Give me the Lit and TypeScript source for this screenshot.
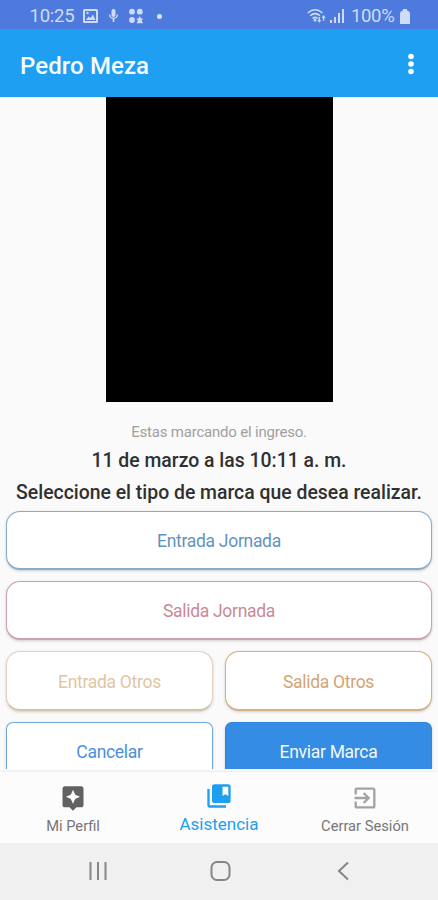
import { LitElement, html, css, svg } from "lit";
import { customElement, property } from "lit/decorators.js";

const tabIcons: Record<string, unknown> = {
  profile: svg`<path d="M19 2H5c-1.11 0-2 .9-2 2v14c0 1.1.89 2 2 2h4l3 3 3-3h4c1.1 0 2-.9 2-2V4c0-1.1-.9-2-2-2zm-5.12 10.88L12 17l-1.88-4.12L6 11l4.12-1.88L12 5l1.88 4.12L18 11l-4.12 1.88z"/>`,
  attendance: svg`<path d="M4 6H2v14c0 1.1.9 2 2 2h14v-2H4V6z"/><path d="M20 2H8c-1.1 0-2 .9-2 2v12c0 1.1.9 2 2 2h12c1.1 0 2-.9 2-2V4c0-1.1-.9-2-2-2zm0 10l-2.5-1.5L15 12V4h5v8z"/>`,
  logout: svg`<path d="M10.09 15.59L11.5 17l5-5-5-5-1.41 1.41L12.67 11H3v2h9.67l-2.58 2.59zM19 3H5c-1.11 0-2 .9-2 2v4h2V5h14v14H5v-4H3v4c0 1.1.89 2 2 2h14c1.1 0 2-.9 2-2V5c0-1.1-.9-2-2-2z"/>`,
};

@customElement("status-bar")
class StatusBar extends LitElement {
  static styles = css`
    :host { display: flex; align-items: center; height: 29px; padding: 3px 28px 0 29.5px; box-sizing: border-box;
      background: #4e7add; color: #cfdcf8; font: 400 18.5px/26px Roboto, sans-serif; }
    svg { display: block; fill: currentColor; flex: none; }
    .time { width: 53px; letter-spacing: -0.25px; }
    .mic { margin-left: 10px; }
    .apps { margin-left: 9px; }
    .dot { margin-left: 13px; width: 5px; height: 5px; border-radius: 50%; background: #dbe5fa; }
    .wifi { margin-left: auto; }
    .signal { margin-left: 4px; }
    .percent { margin-left: 7px; width: 49px; letter-spacing: -0.35px; white-space: nowrap; }
  `;
  render() {
    return html`
      <span class="time">10:25</span>
      <svg width="15" height="14" viewBox="0 0 15 14"><path fill-rule="evenodd" d="M1.5 0h12Q15 0 15 1.500v11Q15 14 13.500 14h-12Q0 14 0 12.500v-11Q0 0 1.500 0zM2 2v10h11V2zM3 11l2.500-3.500L7.500 9l2.500-3.500 2.500 5.500zM3.500 3h2v2h-2z"/></svg>
      <svg class="mic" width="11" height="14" viewBox="0 0 11 14"><rect x="3.500" y="0" width="4" height="8" rx="2"/><path d="M1 5.500h1.300a3.200 3.200 0 0 0 6.400 0H10a4.500 4.500 0 0 1-3.700 4.400V13H4.700V9.900A4.500 4.500 0 0 1 1 5.500z"/></svg>
      <svg class="apps" width="16" height="16" viewBox="0 0 16 16"><circle cx="4" cy="3.700" r="2.900"/><circle cx="11.800" cy="3.700" r="2.900"/><circle cx="4" cy="12" r="2.900"/><path d="M11.800 8l1.300 2.500h2.100l-1.500 2 1.300 2.800h-6.400l1.300-2.800-1.500-2h2.100z"/></svg>
      <span class="dot"></span>
      <svg class="wifi" width="19" height="16" viewBox="0 0 19 16"><g fill="none" stroke="currentColor" stroke-width="1.500"><path d="M.8 5Q8 -1.500 15.500 5"/><path d="M3.200 7.800Q8 3.500 13 7.800"/><path d="M5.600 10.500Q8 8.300 10.600 10.500"/></g><circle cx="8" cy="12" r="1.500"/><path d="M12.300 14.800l-2-2.800h1.300V9h1.400v3h1.300zM16.600 7l2 2.800h-1.300v3h-1.400v-3h-1.300z"/></svg>
      <svg class="signal" width="14" height="14" viewBox="0 0 14 14"><path d="M0 11h2v3H0zM4 8h2v6H4zM8 4h2v10H8zM12 0h2v14h-2z"/></svg>
      <span class="percent">100%</span>
      <svg width="10" height="15" viewBox="0 0 10 15"><path d="M3 0h4v1.500h.5Q10 2.500 10 4.500V15H0V4.500Q0 2.500 2.500 1.500H3z"/></svg>
    `;
  }
}

@customElement("mark-button")
class MarkButton extends LitElement {
  @property() label = "";
  @property({ reflect: true }) tone = "blue";
  static styles = css`
    :host { display: block; height: 59.5px; min-width: 0; }
    .button { display: flex; align-items: center; justify-content: center; width: 100%; height: 100%;
      box-sizing: border-box; padding: 2px 0 0; border: 1.5px solid #86abcb; border-bottom-width: 2px; border-radius: 14px;
      background: #fff; color: #5f93bf; font: 400 17.5px/22px Roboto, sans-serif; letter-spacing: -0.3px;
      box-shadow: 0 1px 3px rgba(0, 0, 0, 0.18); }
    :host([tone="rose"]) .button { color: #c98995; border-color: #cfa0aa; }
    :host([tone="sand"]) .button { color: #dfc6a4; border-color: #e6d2bc; border-bottom-color: #d5c4ac; }
    :host([tone="amber"]) .button { color: #d3a474; border-color: #d2b08a; }
    :host([tone="cancel"]) .button { color: #4a90dc; border-color: #6fa9dc; border-radius: 7px; }
    :host([tone="send"]) .button { color: #f4f9ff; background: #358ce4; border-color: #2e86df; border-radius: 7px; }
  `;
  render() {
    return html`<button class="button">${this.label}</button>`;
  }
}

@customElement("tab-item")
class TabItem extends LitElement {
  @property() label = "";
  @property() icon = "profile";
  static styles = css`
    :host { display: flex; flex-direction: column; align-items: center; padding-top: 12px; box-sizing: border-box;
      color: #767676; font: 400 14.7px/18px Roboto, sans-serif; }
    :host(.active) { color: #1e9ff0; font-size: 17px; padding-top: 10px; }
    svg { display: block; fill: #626262; margin-bottom: 5px; }
    :host(.active) svg { fill: #1e9ff0; margin-bottom: 5px; }
    :host(.muted) svg { fill: #a3a3a3; }
  `;
  render() {
    return html`<svg width="28" height="28" viewBox="0 0 24 24">${tabIcons[this.icon]}</svg><span>${this.label}</span>`;
  }
}

@customElement("app-root")
class AppRoot extends LitElement {
  static styles = css`
    :host { display: flex; flex-direction: column; height: 900px; overflow: hidden; background: #fafafa;
      font-family: Roboto, sans-serif; }
    .header { display: flex; align-items: center; justify-content: space-between; height: 68px; flex: none;
      padding: 4px 24px 0 20px; box-sizing: border-box; background: #1e9ff1; color: #f7fcff; }
    .title { font-size: 24px; line-height: 32px; font-weight: 500; letter-spacing: 0.1px; padding-top: 1px; }
    .more { display: block; fill: #fff; margin-top: -3px; }
    .content { height: 672px; flex: none; overflow: hidden; text-align: center; color: #303030; }
    .preview { width: 227px; height: 304.5px; margin: 0 auto; background: #000; }
    .hint { margin-top: 20px; font-size: 15px; line-height: 20px; color: #a0a0a0; letter-spacing: -0.2px; }
    .line { font-size: 19.4px; line-height: 32px; font-weight: 500; white-space: nowrap; }
    .date { margin-top: 3px; }
    .actions { display: grid; grid-template-columns: 1fr 1fr; gap: 10.9px 12px; padding: 0 6px; margin-top: 2px; }
    .wide { grid-column: span 2; }
    .tabs { display: grid; grid-template-columns: repeat(3, 1fr); height: 71px; margin-top: 3px; flex: none;
      background: #fcfcfc; box-shadow: 0 -1px 2px rgba(0, 0, 0, 0.06); }
    .nav { flex: 1; background: #f0f0f0; }
    .nav svg { display: block; fill: none; stroke: #858585; stroke-width: 2; }
  `;
  render() {
    return html`
      <status-bar></status-bar>
      <header class="header">
        <span class="title">Pedro Meza</span>
        <svg class="more" width="6" height="22" viewBox="0 0 6 22"><circle cx="3" cy="3.500" r="2.800"/><circle cx="3" cy="11" r="2.800"/><circle cx="3" cy="18.500" r="2.800"/></svg>
      </header>
      <main class="content">
        <div class="preview"></div>
        <div class="hint">Estas marcando el ingreso.</div>
        <div class="line date">11 de marzo a las 10:11 a. m.</div>
        <div class="line">Seleccione el tipo de marca que desea realizar.</div>
        <div class="actions">
          <mark-button class="wide" tone="blue" label="Entrada Jornada"></mark-button>
          <mark-button class="wide" tone="rose" label="Salida Jornada"></mark-button>
          <mark-button tone="sand" label="Entrada Otros"></mark-button>
          <mark-button tone="amber" label="Salida Otros"></mark-button>
          <mark-button tone="cancel" label="Cancelar"></mark-button>
          <mark-button tone="send" label="Enviar Marca"></mark-button>
        </div>
      </main>
      <nav class="tabs">
        <tab-item icon="profile" label="Mi Perfil"></tab-item>
        <tab-item class="active" icon="attendance" label="Asistencia"></tab-item>
        <tab-item class="muted" icon="logout" label="Cerrar Sesión"></tab-item>
      </nav>
      <footer class="nav">
        <svg width="438" height="57" viewBox="0 0 438 57"><path d="M90.500 19v18M98 19v18M105.500 19v18"/><rect x="211.500" y="19" width="18" height="18" rx="5.500"/><path d="M348 19.500l-9 8.500 9 8.500"/></svg>
      </footer>
    `;
  }
}
